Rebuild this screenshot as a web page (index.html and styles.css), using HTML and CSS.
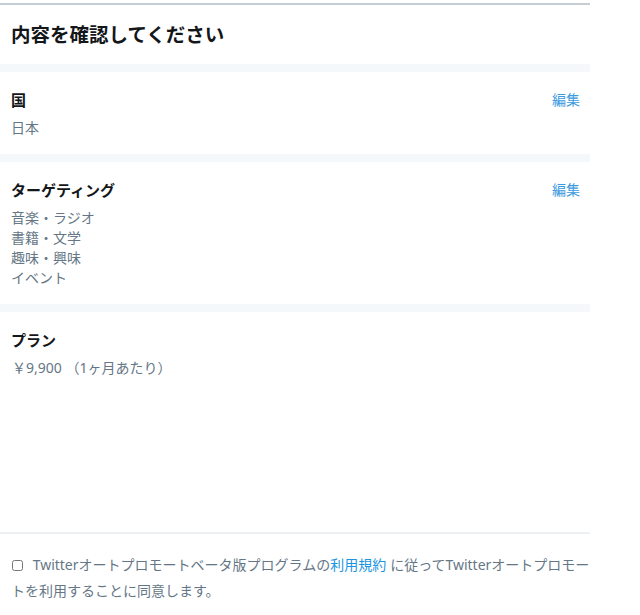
FILE: index.html
```html
<!DOCTYPE html>
<html lang="ja">
<head>
  <meta charset="UTF-8">
  <title>内容を確認してください</title>
  <link rel="stylesheet" href="styles.css">
</head>
<body>

<div class="panel">
  <div class="panel-header">
    <h2>内容を確認してください</h2>
  </div>

  <div class="section">
    <div class="section-top">
      <h3>国</h3>
      <a href="#" class="edit">編集</a>
    </div>
    <ul class="values">
      <li>日本</li>
    </ul>
  </div>

  <div class="section">
    <div class="section-top">
      <h3>ターゲティング</h3>
      <a href="#" class="edit">編集</a>
    </div>
    <ul class="values">
      <li>音楽・ラジオ</li>
      <li>書籍・文学</li>
      <li>趣味・興味</li>
      <li>イベント</li>
    </ul>
  </div>

  <div class="section last">
    <div class="section-top">
      <h3>プラン</h3>
    </div>
    <ul class="values">
      <li>￥9,900 （1ヶ月あたり）</li>
    </ul>
  </div>

  <div class="agree">
    <label>
      <input type="checkbox" id="terms">
      <span class="line">Twitterオートプロモートベータ版プログラムの<a href="#">利用規約</a>に従ってTwitterオートプロモー</span><br>トを利用することに同意します。
    </label>
  </div>
</div>

</body>
</html>
```

FILE: styles.css
```css
body {
  margin: 0;
  background-color: #fff;
  font-family: "Noto Sans", "Noto Sans CJK JP", sans-serif;
  color: #14171a;
}
.panel {
  width: 590px;
  margin-top: 3px;
  border-top: 2px solid #c4ccd4;
}
.panel-header {
  height: 59px;
  padding: 0 11px;
  display: flex;
  align-items: center;
  border-bottom: 8px solid #f5f8fa;
}
.panel-header h2 {
  margin: 0 0 2px;
  font-size: 19.5px;
  font-weight: bold;
}
.section {
  padding: 18px 10px 16px 11px;
  border-bottom: 8px solid #f5f8fa;
}
.section.last {
  border-bottom: none;
  height: 220px;
  box-sizing: border-box;
}
.section-top {
  display: flex;
  justify-content: space-between;
  align-items: center;
}
.section-top h3 {
  margin: 0;
  font-size: 15px;
  line-height: 20px;
  font-weight: bold;
}
.edit {
  font-size: 14px;
  line-height: 20px;
  color: #3b9ae0;
  text-decoration: none;
}
.values {
  list-style: none;
  margin: 8px 0 0;
  padding: 0;
  font-size: 14px;
  line-height: 20px;
  color: #657786;
}
.section.last .values {
  margin-left: 1px;
}
.agree {
  border-top: 2px solid #eef1f4;
  padding: 18px 0 10px 11px;
  font-size: 14px;
  line-height: 26px;
  color: #657786;
}
.agree .line {
  white-space: nowrap;
}
.agree input {
  width: 11px;
  height: 11px;
  margin: 0 6px 0 1px;
  vertical-align: -1px;
}
.agree a {
  color: #1b95e0;
  text-decoration: none;
  margin-right: 4px;
}
```
